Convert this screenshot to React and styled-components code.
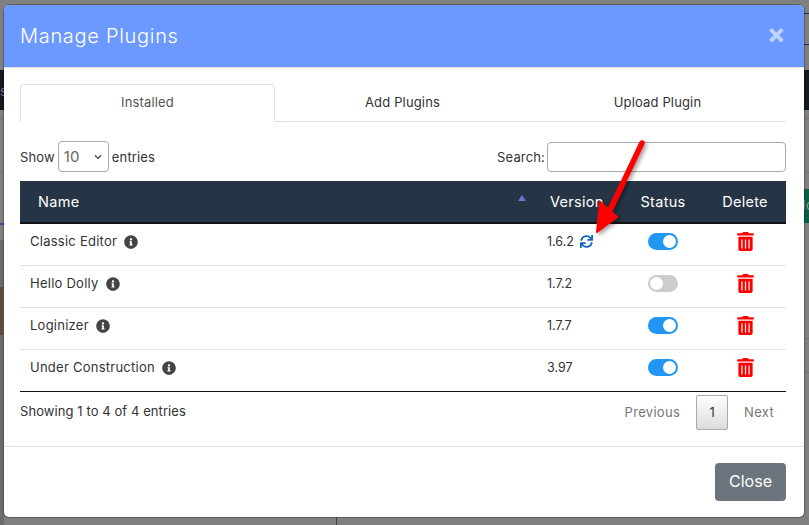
import React from "react";
import styled, { createGlobalStyle } from "styled-components";
import { FaInfoCircle, FaSync, FaTrashAlt, FaChevronDown } from "react-icons/fa";

const plugins = [
    { name: "Classic Editor", version: "1.6.2", active: true, update: true },
    { name: "Hello Dolly", version: "1.7.2", active: false },
    { name: "Loginizer", version: "1.7.7", active: true },
    { name: "Under Construction", version: "3.97", active: true },
];

const App = () => {
    return (
        <Page>
            <GlobalStyle />
            <BehindPage>
                <TopNav>
                    <NavLine />
                    <NavLine />
                </TopNav>
                <DarkBar>s</DarkBar>
                <PageRow $height={9} />
                <PageRow $height={54} />
                <GreenRow>
                    <GreenButton>Mo</GreenButton>
                </GreenRow>
                <BlueTick />
                <LowerArea>
                    <BrownBox />
                    <LowerRule $top={3} />
                    <LowerRule $top={33} />
                    <BottomTick />
                </LowerArea>
            </BehindPage>

            <Modal>
                <ModalHeader>
                    <ModalTitle>Manage Plugins</ModalTitle>
                    <CloseX>×</CloseX>
                </ModalHeader>
                <ModalBody>
                    <Tabs>
                        <Tab $active>Installed</Tab>
                        <Tab>Add Plugins</Tab>
                        <Tab>Upload Plugin</Tab>
                    </Tabs>
                    <Controls>
                        <ShowLabel>
                            Show
                            <SelectBox>
                                10
                                <FaChevronDown size={8} color="#444" />
                            </SelectBox>
                            entries
                        </ShowLabel>
                        <SearchLabel>
                            Search:
                            <SearchInput type="text" />
                        </SearchLabel>
                    </Controls>
                    <Table>
                        <thead>
                            <tr>
                                <NameHead>
                                    Name
                                    <SortArrow />
                                </NameHead>
                                <VersionHead>Version</VersionHead>
                                <CenterHead>Status</CenterHead>
                                <CenterHead>Delete</CenterHead>
                            </tr>
                        </thead>
                        <tbody>
                            {plugins.map((p) => (
                                <Row key={p.name}>
                                    <NameCell>
                                        {p.name}
                                        <InfoIcon />
                                    </NameCell>
                                    <VersionCell>
                                        {p.version}
                                        {p.update && <UpdateIcon />}
                                    </VersionCell>
                                    <CenterCell>
                                        <Toggle $on={p.active} />
                                    </CenterCell>
                                    <CenterCell>
                                        <TrashIcon />
                                    </CenterCell>
                                </Row>
                            ))}
                        </tbody>
                    </Table>
                    <TableFooter>
                        <Info>Showing 1 to 4 of 4 entries</Info>
                        <Pagination>
                            <PageLink $right={16}>Previous</PageLink>
                            <PageCurrent>1</PageCurrent>
                            <PageLink $right={12}>Next</PageLink>
                        </Pagination>
                    </TableFooter>
                </ModalBody>
                <ModalFooter>
                    <CloseButton>Close</CloseButton>
                </ModalFooter>
            </Modal>

            <Arrow viewBox="0 0 70 110" width="70" height="110">
                <defs>
                    <filter id="arrowShadow" x="-30%" y="-30%" width="160%" height="160%">
                        <feDropShadow dx="2" dy="2" stdDeviation="2" floodColor="#000" floodOpacity="0.4" />
                    </filter>
                </defs>
                <g filter="url(#arrowShadow)">
                    <path d="M52 9 L20 76" stroke="#f00" strokeWidth="5.5" strokeLinecap="round" fill="none" />
                    <path d="M7 98 L10 68 L27 83 Z" fill="#f00" stroke="#f00" strokeWidth="2" strokeLinejoin="round" />
                </g>
            </Arrow>
        </Page>
    );
};

export default App;

const GlobalStyle = createGlobalStyle`
    html, body {
        margin: 0;
        padding: 0;
        background: #808080;
    }
    * {
        box-sizing: border-box;
    }
`;

const Page = styled.div`
    position: relative;
    width: 809px;
    height: 525px;
    overflow: hidden;
    font-family: "Inter", "Open Sans", sans-serif;
    font-size: 13px;
    letter-spacing: 0.15px;
    color: #333;
`;

const BehindPage = styled.div`
    display: flex;
    flex-direction: column;
    height: 100%;
    background: #7f7f7f;
`;

const TopNav = styled.div`
    height: 70px;
    padding-top: 13px;
    display: flex;
    flex-direction: column;
    align-items: flex-end;
    gap: 30px;
`;

const NavLine = styled.div`
    width: 100px;
    height: 1px;
    background: #1d2f52;
`;

const DarkBar = styled.div`
    height: 40px;
    background: #14181f;
    color: #777;
    font-size: 13px;
    line-height: 42px;
`;

const PageRow = styled.div`
    height: ${(p) => p.$height}px;
    border-bottom: 1px solid #737373;
`;

const GreenRow = styled.div`
    display: flex;
    justify-content: flex-end;
    padding-top: 16px;
`;

const GreenButton = styled.div`
    width: 100px;
    height: 34px;
    padding-left: 85px;
    background: #0c5c45;
    color: #7fa89b;
    font-size: 13px;
    line-height: 33px;
    white-space: nowrap;
    overflow: hidden;
`;

const BlueTick = styled.div`
    width: 4px;
    height: 2px;
    margin-bottom: 15px;
    background: #2d4f8f;
`;

const LowerArea = styled.div`
    flex: 1;
    display: flex;
    flex-direction: column;
    background: linear-gradient(90deg, #6c6c6c 0 4px, #7f7f7f 4px);
    padding-top: 47px;
`;

const BrownBox = styled.div`
    width: 3px;
    height: 48px;
    background: #5f4a42;
`;

const LowerRule = styled.div`
    height: 1px;
    margin-top: ${(p) => p.$top}px;
    background: #707070;
`;

const BottomTick = styled.div`
    width: 1px;
    height: 8px;
    margin: auto 0 0 336px;
    background: #444;
`;

const Modal = styled.div`
    position: absolute;
    left: 4px;
    top: 5px;
    width: 800px;
    height: 512px;
    display: flex;
    flex-direction: column;
    background: #fff;
    border-radius: 5px;
    box-shadow: 0 0 0 1px rgba(0, 0, 0, 0.25);
    overflow: hidden;
`;

const ModalHeader = styled.div`
    height: 63px;
    flex-shrink: 0;
    display: flex;
    align-items: center;
    justify-content: space-between;
    padding: 0 18px 1px 16px;
    background: #6c99ff;
    border-bottom: 1px solid #dee2e6;
`;

const ModalTitle = styled.div`
    color: #fff;
    font-size: 20px;
    font-weight: 300;
    letter-spacing: 0.7px;
`;

const CloseX = styled.div`
    color: #c0d3ff;
    font-size: 28px;
    font-weight: 700;
    line-height: 1;
    margin-top: -4px;
`;

const ModalBody = styled.div`
    flex: 1;
    padding: 16px 18px 0 16px;
`;

const Tabs = styled.div`
    display: grid;
    grid-template-columns: repeat(3, 255px);
    height: 38px;
    border-bottom: 1px solid #dee2e6;
`;

const Tab = styled.div`
    display: flex;
    align-items: center;
    justify-content: center;
    height: ${(p) => (p.$active ? "38px" : "37px")};
    color: ${(p) => (p.$active ? "#555" : "#333")};
    background: #fff;
    border: 1px solid ${(p) => (p.$active ? "#dee2e6" : "transparent")};
    border-bottom: none;
    border-radius: 4px 4px 0 0;
    padding-bottom: ${(p) => (p.$active ? "3px" : "2px")};
`;

const Controls = styled.div`
    display: flex;
    justify-content: space-between;
    align-items: center;
    margin-top: 19px;
    height: 31px;
`;

const ShowLabel = styled.div`
    display: flex;
    align-items: center;
    gap: 3px;
`;

const SelectBox = styled.div`
    width: 51px;
    height: 31px;
    display: flex;
    align-items: center;
    justify-content: space-between;
    padding: 0 6px 0 5px;
    border: 1px solid #aaa;
    border-radius: 4px;
    font-size: 15px;
    color: #666;
`;

const SearchLabel = styled.label`
    display: flex;
    align-items: center;
    gap: 2px;
`;

const SearchInput = styled.input`
    width: 239px;
    height: 30px;
    border: 1px solid #aaa;
    border-radius: 4px;
    outline: none;
`;

const Table = styled.table`
    width: 766px;
    margin-top: 9px;
    border-collapse: collapse;
    table-layout: fixed;
    border-bottom: 1px solid #111;
`;

const HeadCell = styled.th`
    height: 42px;
    background: #253545;
    color: #fff;
    font-size: 14.5px;
    font-weight: 400;
    letter-spacing: 0.3px;
    border-bottom: 2px solid #111;
`;

const NameHead = styled(HeadCell)`
    position: relative;
    width: 517px;
    padding: 0 0 0 18px;
    text-align: left;
`;

const VersionHead = styled(HeadCell)`
    width: 85px;
    padding: 0 0 0 13px;
    text-align: left;
`;

const CenterHead = styled(HeadCell)`
    width: 82px;
    padding: 0;
    text-align: center;
`;

const SortArrow = styled.span`
    position: absolute;
    right: 11px;
    top: 14px;
    width: 0;
    height: 0;
    border-left: 4px solid transparent;
    border-right: 4px solid transparent;
    border-bottom: 6px solid #7474d0;
`;

const Row = styled.tr`
    height: 42px;
    border-top: 1px solid #dee2e6;

    &:first-child {
        border-top: none;
    }
`;

const NameCell = styled.td`
    padding: 0 0 7px 10px;
    color: #333;
    letter-spacing: 0.25px;
`;

const VersionCell = styled.td`
    padding: 0 0 5px 10px;
    color: #333;
    font-size: 12.5px;
    letter-spacing: 0;
`;

const CenterCell = styled.td`
    padding: 0 0 5px;
    text-align: center;
    vertical-align: middle;
    line-height: 0;
`;

const InfoIcon = styled(FaInfoCircle)`
    width: 14px;
    height: 14px;
    margin-left: 7px;
    color: #444;
    vertical-align: -3px;
`;

const UpdateIcon = styled(FaSync)`
    width: 13px;
    height: 13px;
    margin-left: 6px;
    color: #1565c0;
    vertical-align: -2px;
`;

const TrashIcon = styled(FaTrashAlt)`
    width: 17px;
    height: 19px;
    color: #f00;
`;

const Toggle = styled.span`
    position: relative;
    display: inline-block;
    width: 30px;
    height: 17px;
    border-radius: 9px;
    background: ${(p) => (p.$on ? "#2196f3" : "#ccc")};

    &::after {
        content: "";
        position: absolute;
        top: 2px;
        left: ${(p) => (p.$on ? "15px" : "2px")};
        width: 13px;
        height: 13px;
        border-radius: 50%;
        background: #fff;
    }
`;

const TableFooter = styled.div`
    display: flex;
    justify-content: space-between;
    align-items: flex-start;
    padding-top: 3px;
`;

const Info = styled.div`
    margin-top: 8px;
    letter-spacing: 0.08px;
`;

const Pagination = styled.div`
    display: flex;
    align-items: center;
    height: 35px;
`;

const PageLink = styled.div`
    padding: 0 ${(p) => p.$right}px 0 16px;
    color: #777;
    letter-spacing: 0.3px;
`;

const PageCurrent = styled.div`
    width: 32px;
    height: 35px;
    display: flex;
    align-items: center;
    justify-content: center;
    border: 1px solid #aaa;
    border-radius: 2px;
    background: linear-gradient(#fff, #dcdcdc);
    color: #333;
`;

const ModalFooter = styled.div`
    height: 71px;
    flex-shrink: 0;
    display: flex;
    justify-content: flex-end;
    align-items: center;
    padding: 0 18px 0 0;
    border-top: 1px solid #dee2e6;
`;

const CloseButton = styled.button`
    width: 71px;
    height: 38px;
    padding: 0 0 2px;
    border: none;
    border-radius: 4px;
    background: #6c757d;
    color: #fff;
    font-family: inherit;
    font-size: 16px;
`;

const Arrow = styled.svg`
    position: absolute;
    left: 590px;
    top: 134px;
    pointer-events: none;
`;
